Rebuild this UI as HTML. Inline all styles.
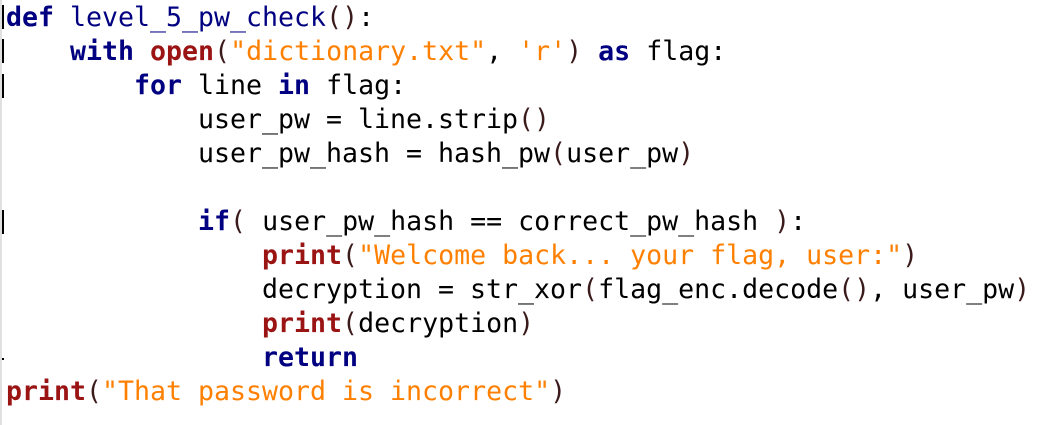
<!DOCTYPE html>
<html><head><meta charset="utf-8"><style>
html,body{margin:0;padding:0;background:#fff;width:1049px;height:425px;overflow:hidden}
.bar{position:absolute;left:0;top:0;width:2px;height:425px;background:#e0e0e0}
.m{position:absolute;left:2px;width:2px;background:#000}
pre{position:absolute;left:6px;top:1px;margin:0;font-family:"DejaVu Sans Mono","Liberation Mono",monospace;font-size:26.58px;line-height:34px;color:#000}
.k{color:#000080;font-weight:bold}
.f{color:#000080}
.b{color:#9b1414;font-weight:bold}
.s{color:#ff8000}
.p{color:#3a1a1a}
</style></head><body>
<div class="bar"></div>
<div class="m" style="top:5px;height:24px"></div>
<div class="m" style="top:39px;height:24px"></div>
<div class="m" style="top:74px;height:24px"></div>
<div class="m" style="top:210px;height:24px"></div>
<div class="m" style="top:358px;height:2px"></div>
<pre><span class="k">def</span> <span class="f">level_5_pw_check</span><span class="p">()</span>:
    <span class="k">with</span> <span class="b">open</span><span class="p">(</span><span class="s">"dictionary.txt"</span>, <span class="s">'r'</span><span class="p">)</span> <span class="k">as</span> flag:
        <span class="k">for</span> line <span class="k">in</span> flag:
            user_pw = line.strip<span class="p">()</span>
            user_pw_hash = hash_pw<span class="p">(</span>user_pw<span class="p">)</span>

            <span class="k">if</span><span class="p">(</span> user_pw_hash == correct_pw_hash <span class="p">)</span>:
                <span class="b">print</span><span class="p">(</span><span class="s">"Welcome back... your flag, user:"</span><span class="p">)</span>
                decryption = str_xor<span class="p">(</span>flag_enc.decode<span class="p">()</span>, user_pw<span class="p">)</span>
                <span class="b">print</span><span class="p">(</span>decryption<span class="p">)</span>
                <span class="k">return</span>
<span class="b">print</span><span class="p">(</span><span class="s">"That password is incorrect"</span><span class="p">)</span></pre>
</body></html>
